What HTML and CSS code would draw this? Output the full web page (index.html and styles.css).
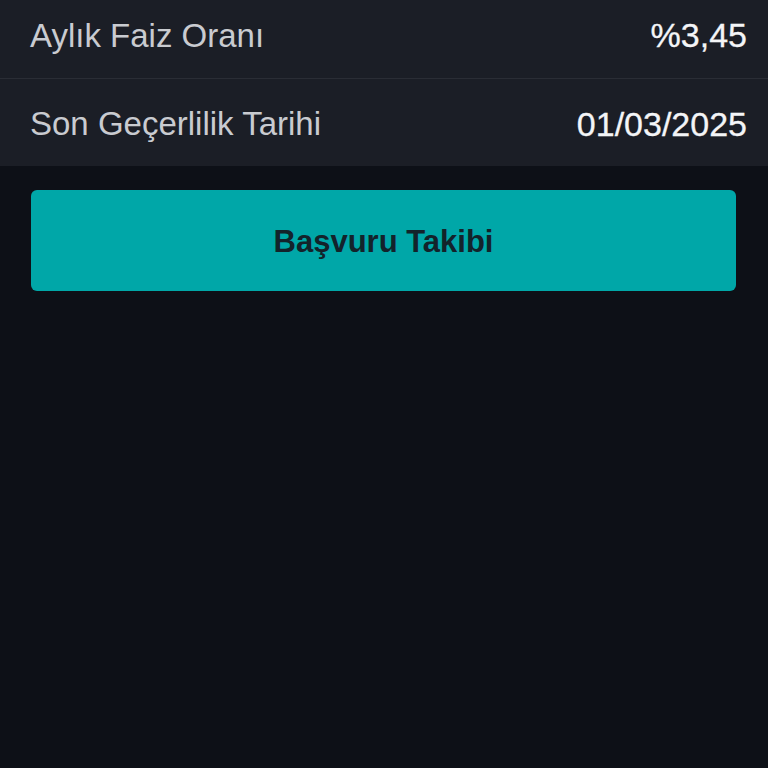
FILE: index.html
```html
<!DOCTYPE html>
<html lang="tr">
<head>
    <meta charset="UTF-8">
    <meta name="viewport" content="width=device-width, initial-scale=1.0">
    <title>Kredi Detayı</title>
    <link rel="stylesheet" href="styles.css">
</head>
<body>
    <div id="details">
        <div class="detail-row first">
            <span class="label">Aylık Faiz Oranı</span>
            <span class="value">%3,45</span>
        </div>
        <div class="detail-row">
            <span class="label">Son Geçerlilik Tarihi</span>
            <span class="value">01/03/2025</span>
        </div>
    </div>

    <div id="actions">
        <button id="track-btn">Başvuru Takibi</button>
    </div>
</body>
</html>
```

FILE: styles.css
```css
html, body {
    height: 100%;
}

body {
    margin: 0;
    background-color: #0d1017;
    font-family: "Liberation Sans", Arial, sans-serif;
    overflow: hidden;
}

#details {
    background-color: #1b1e26;
}

.detail-row {
    display: flex;
    justify-content: space-between;
    align-items: center;
    box-sizing: border-box;
    height: 87px;
    padding: 3px 21px 0 30px;
}

.detail-row.first {
    height: 89px;
    margin-top: -10px;
    border-bottom: 1px solid #2a2d35;
}

.label {
    font-size: 33px;
    color: #c9cbd0;
}

.value {
    font-size: 34px;
    color: #f4f5f7;
    -webkit-text-stroke: 0.3px #f4f5f7;
}

#actions {
    padding: 24px 32px 0 31px;
}

#track-btn {
    display: block;
    width: 100%;
    height: 101px;
    padding-top: 3px;
    border: none;
    border-radius: 6px;
    background-color: #00a7a8;
    color: #13232b;
    font-family: "Liberation Sans", Arial, sans-serif;
    font-size: 31px;
    font-weight: bold;
    cursor: pointer;
}
```
